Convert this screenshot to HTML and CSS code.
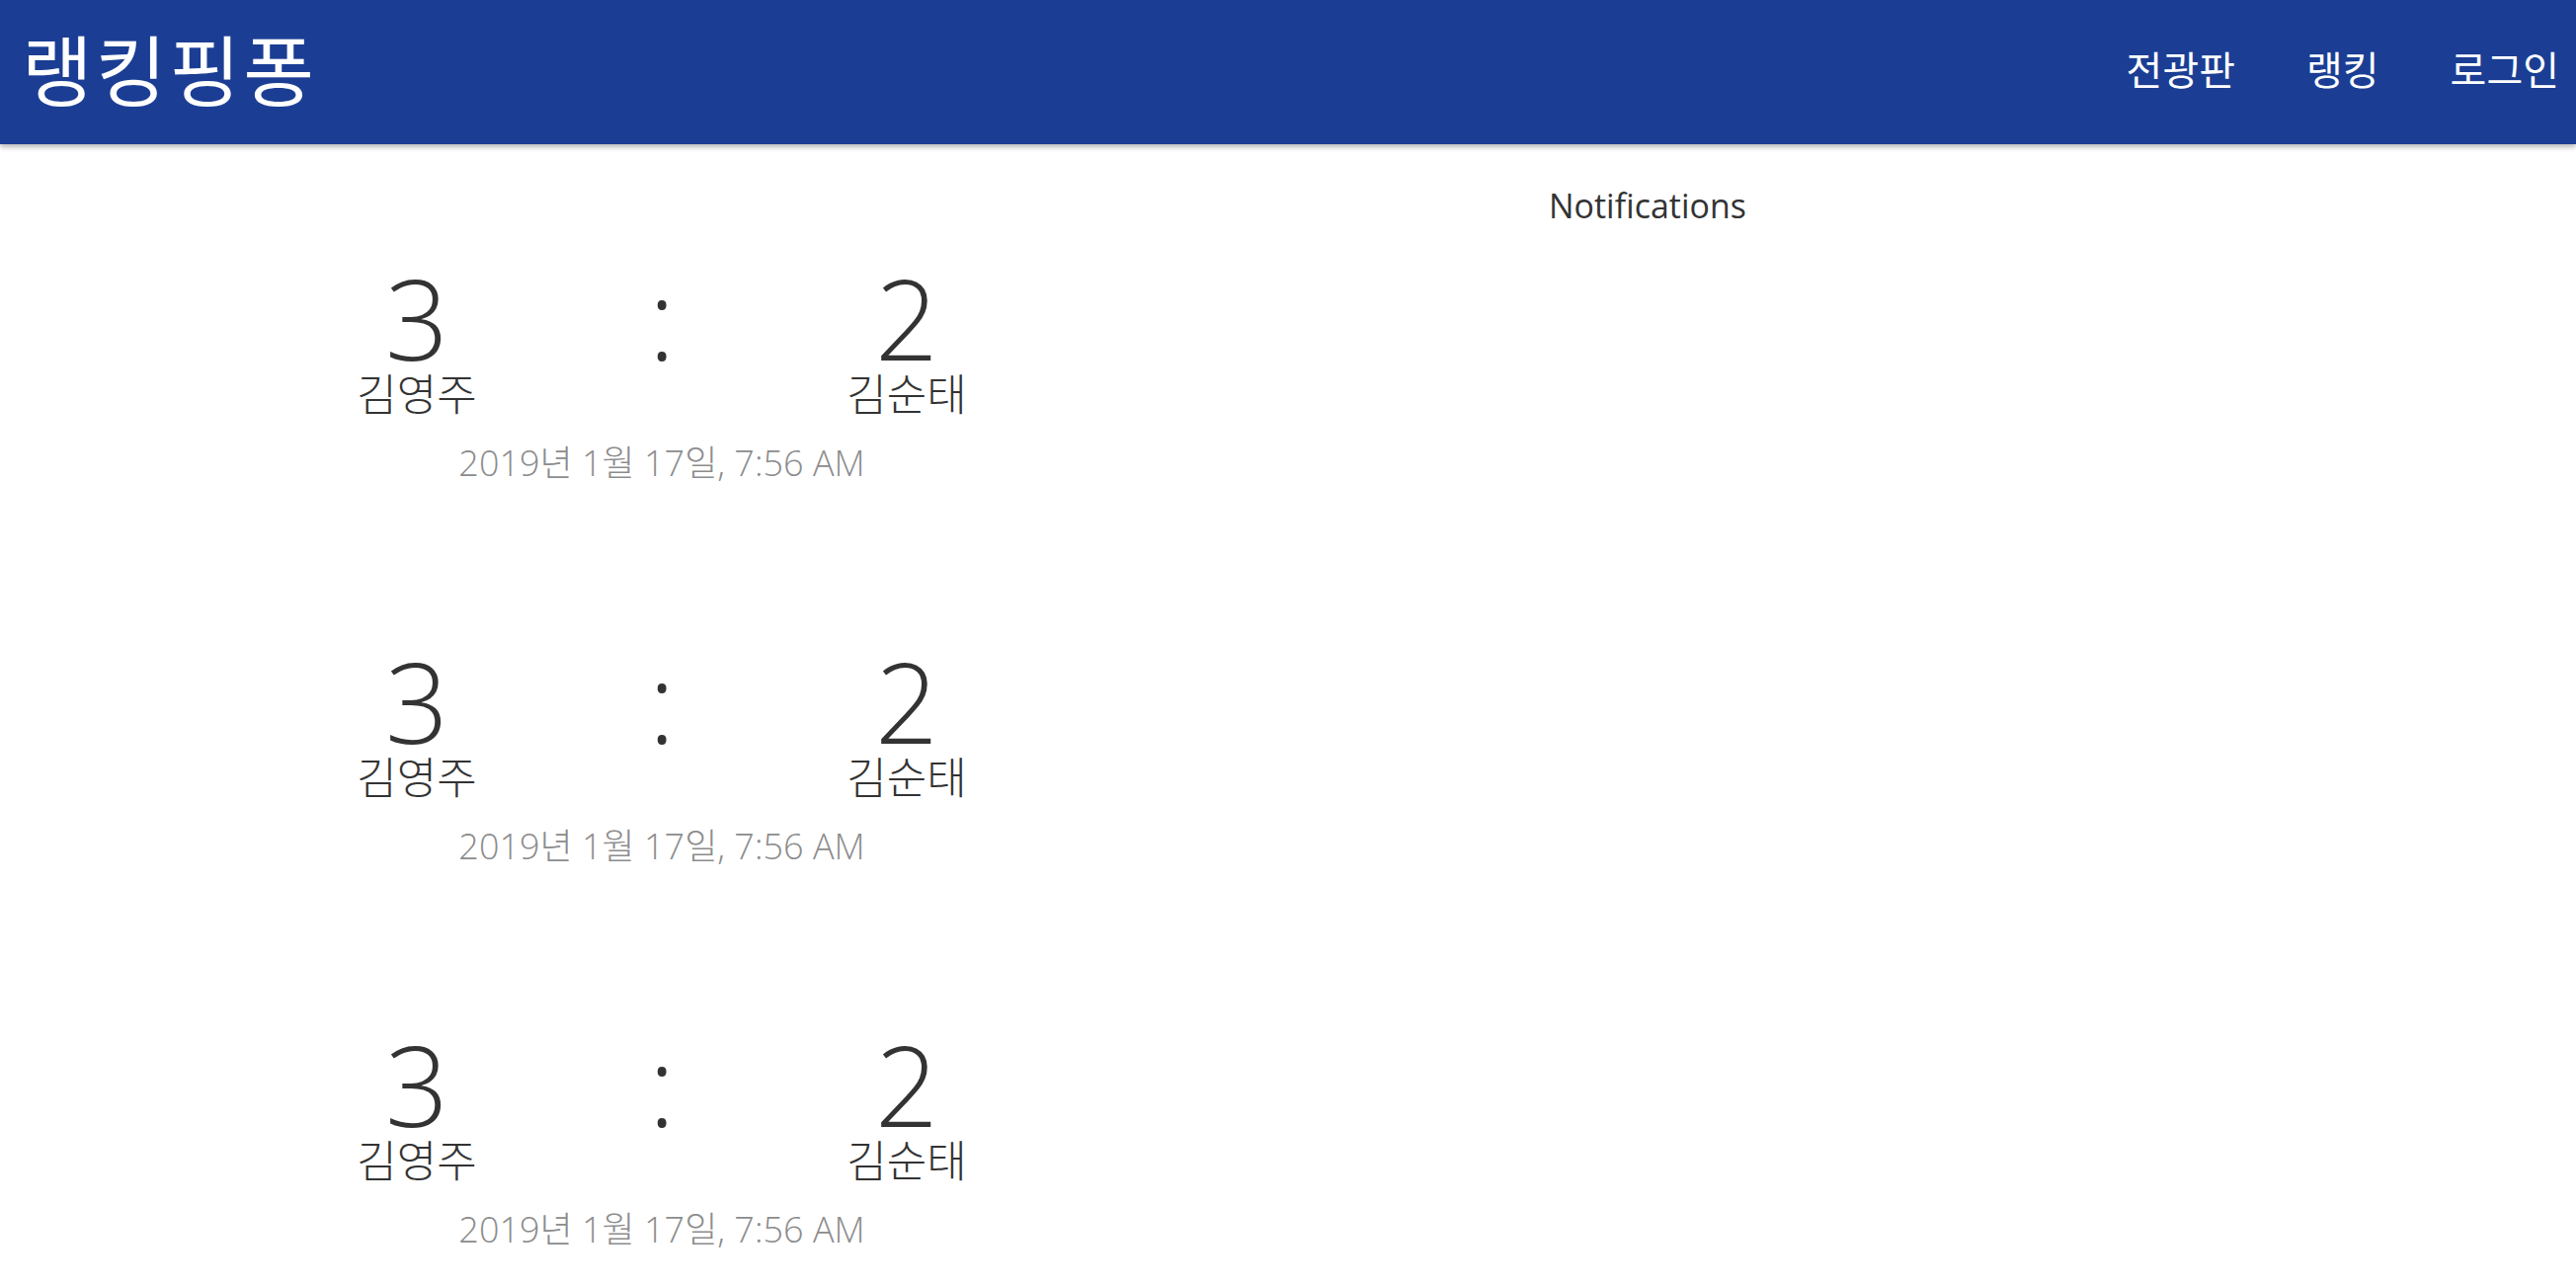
FILE: index.html
```html
<!DOCTYPE html>
<html lang="ko">
<head>
<meta charset="utf-8">
<title>랭킹핑퐁</title>
<link rel="stylesheet" href="styles.css">
</head>
<body>
<header class="topbar">
  <div class="logo">랭킹핑퐁</div>
  <nav class="nav">
    <a class="nav-link" href="#">전광판</a>
    <a class="nav-link" href="#">랭킹</a>
    <a class="nav-link" href="#">로그인</a>
  </nav>
</header>
<main class="layout">
  <section class="matches">
    <article class="match">
      <div class="score">3</div>
      <div class="colon">:</div>
      <div class="score">2</div>
      <div class="player">김영주</div>
      <div></div>
      <div class="player">김순태</div>
      <div class="date">2019년 1월 17일, 7:56 AM</div>
    </article>
    <article class="match">
      <div class="score">3</div>
      <div class="colon">:</div>
      <div class="score">2</div>
      <div class="player">김영주</div>
      <div></div>
      <div class="player">김순태</div>
      <div class="date">2019년 1월 17일, 7:56 AM</div>
    </article>
    <article class="match">
      <div class="score">3</div>
      <div class="colon">:</div>
      <div class="score">2</div>
      <div class="player">김영주</div>
      <div></div>
      <div class="player">김순태</div>
      <div class="date">2019년 1월 17일, 7:56 AM</div>
    </article>
  </section>
  <aside class="notifications">
    <div class="notif-title">Notifications</div>
  </aside>
</main>
</body>
</html>
```
FILE: styles.css
```css
html, body {
  margin: 0;
  padding: 0;
  background: #ffffff;
}
body {
  font-family: "Open Sans", "Noto Sans CJK KR", sans-serif;
  color: #333333;
  overflow: hidden;
}
.topbar {
  height: 146px;
  background: #1b3e94;
  display: flex;
  align-items: center;
  justify-content: space-between;
  box-shadow: 0 3px 5px rgba(0, 0, 0, 0.28);
  position: relative;
  z-index: 1;
}
.logo {
  font-family: "Noto Sans CJK KR", sans-serif;
  font-size: 78px;
  line-height: 1;
  color: #ffffff;
  padding-left: 22px;
  padding-bottom: 10px;
  letter-spacing: 3px;
}
.nav {
  display: flex;
  gap: 72px;
  padding-right: 17px;
  padding-bottom: 8px;
}
.nav-link {
  font-family: "Noto Sans CJK KR", sans-serif;
  font-size: 40px;
  line-height: 1;
  color: #ffffff;
  text-decoration: none;
}
.layout {
  display: grid;
  grid-template-columns: 1340px 656px;
  padding-top: 42px;
}
.matches {
  display: flex;
  flex-direction: column;
  align-items: center;
  padding-top: 90px;
  gap: 173px;
}
.match {
  display: grid;
  grid-template-columns: repeat(3, 248px);
  justify-items: center;
}
.score, .colon {
  font-family: "Open Sans", sans-serif;
  font-weight: 300;
  font-size: 112px;
  line-height: 88px;
  color: #333333;
}
.player {
  font-family: "Noto Sans CJK KR", sans-serif;
  font-weight: 300;
  font-size: 44px;
  line-height: 50px;
  margin-top: 6px;
  color: #333333;
}
.date {
  grid-column: 1 / 4;
  font-family: "Open Sans", "Noto Sans CJK KR", sans-serif;
  font-weight: 300;
  font-size: 36px;
  line-height: 48px;
  color: #8c8c8c;
  margin-top: 23px;
}
.notifications {
  display: flex;
  justify-content: center;
}
.notif-title {
  font-family: "Open Sans", sans-serif;
  font-size: 34px;
  line-height: 40px;
  color: #333333;
}
```
